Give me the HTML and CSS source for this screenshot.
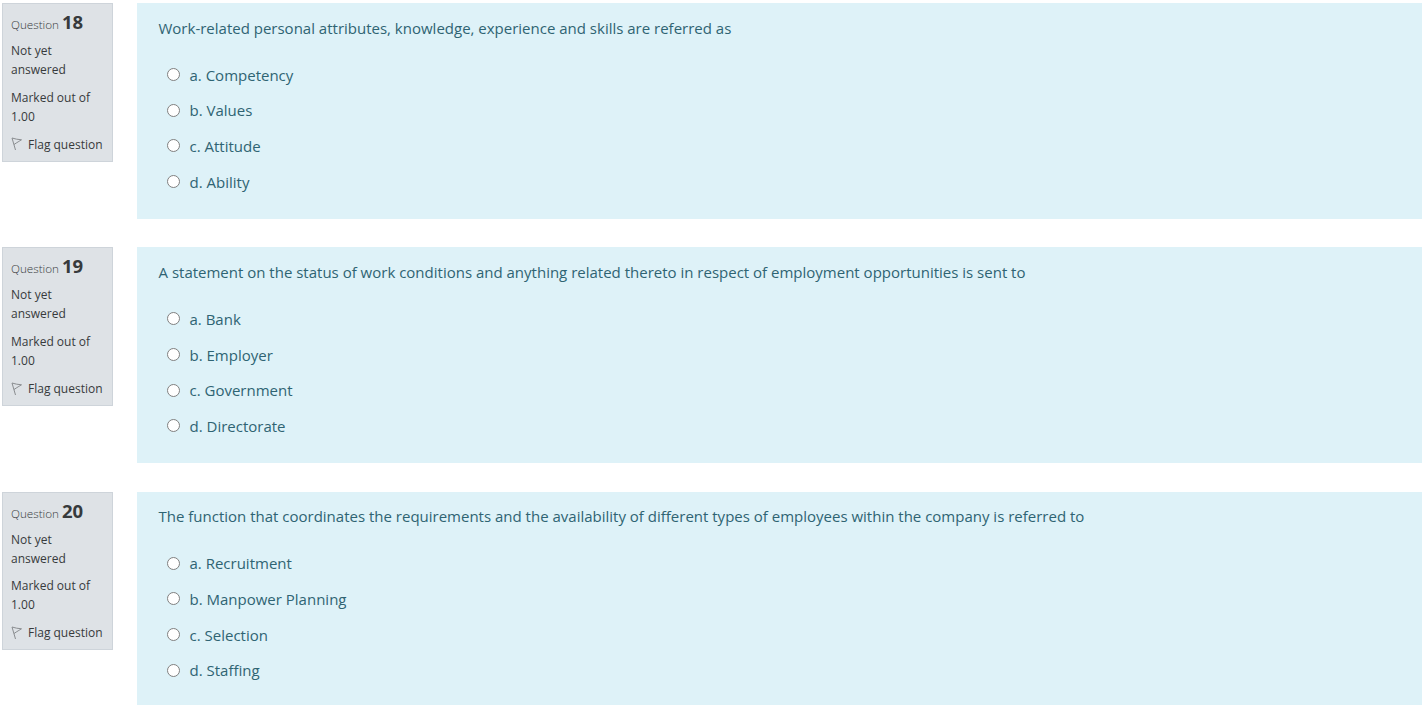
FILE: index.html
```html
<!DOCTYPE html>
<html lang="en">
<head>
<meta charset="utf-8">
<title>Quiz</title>
<link rel="stylesheet" href="styles.css">
</head>
<body>
<main class="quiz">
  <section class="que">
    <aside class="info">
      <h3 class="qno">Question <span class="num">18</span></h3>
      <p class="state">Not yet answered</p>
      <p class="grade">Marked out of 1.00</p>
      <p class="flag"><svg class="flag-icon" viewBox="0 0 12 14"><path d="M1 1 L4.5 13 M1 1 C4 2 7 2.5 10.5 2.8 C8.5 4 6 5.5 3 7.5" /></svg>Flag question</p>
    </aside>
    <div class="content">
      <p class="qtext">Work-related personal attributes, knowledge, experience and skills are referred as</p>
      <div class="answers">
        <label class="opt"><input type="radio" name="q18"><span>a. Competency</span></label>
        <label class="opt"><input type="radio" name="q18"><span>b. Values</span></label>
        <label class="opt"><input type="radio" name="q18"><span>c. Attitude</span></label>
        <label class="opt"><input type="radio" name="q18"><span>d. Ability</span></label>
      </div>
    </div>
  </section>
  <section class="que">
    <aside class="info">
      <h3 class="qno">Question <span class="num">19</span></h3>
      <p class="state">Not yet answered</p>
      <p class="grade">Marked out of 1.00</p>
      <p class="flag"><svg class="flag-icon" viewBox="0 0 12 14"><path d="M1 1 L4.5 13 M1 1 C4 2 7 2.5 10.5 2.8 C8.5 4 6 5.5 3 7.5" /></svg>Flag question</p>
    </aside>
    <div class="content">
      <p class="qtext">A statement on the status of work conditions and anything related thereto in respect of employment opportunities is sent to</p>
      <div class="answers">
        <label class="opt"><input type="radio" name="q19"><span>a. Bank</span></label>
        <label class="opt"><input type="radio" name="q19"><span>b. Employer</span></label>
        <label class="opt"><input type="radio" name="q19"><span>c. Government</span></label>
        <label class="opt"><input type="radio" name="q19"><span>d. Directorate</span></label>
      </div>
    </div>
  </section>
  <section class="que">
    <aside class="info">
      <h3 class="qno">Question <span class="num">20</span></h3>
      <p class="state">Not yet answered</p>
      <p class="grade">Marked out of 1.00</p>
      <p class="flag"><svg class="flag-icon" viewBox="0 0 12 14"><path d="M1 1 L4.5 13 M1 1 C4 2 7 2.5 10.5 2.8 C8.5 4 6 5.5 3 7.5" /></svg>Flag question</p>
    </aside>
    <div class="content">
      <p class="qtext">The function that coordinates the requirements and the availability of different types of employees within the company is referred to</p>
      <div class="answers">
        <label class="opt"><input type="radio" name="q20"><span>a. Recruitment</span></label>
        <label class="opt"><input type="radio" name="q20"><span>b. Manpower Planning</span></label>
        <label class="opt"><input type="radio" name="q20"><span>c. Selection</span></label>
        <label class="opt"><input type="radio" name="q20"><span>d. Staffing</span></label>
      </div>
    </div>
  </section>
</main>
</body>
</html>
```
FILE: styles.css
```css
html, body {
  margin: 0;
  padding: 0;
  background: #fff;
  overflow: hidden;
}
body {
  font-family: "Open Sans", sans-serif;
  font-size: 15px;
  color: #373a3c;
}
.quiz {
  padding: 3px 0 0 2px;
}
.que {
  display: flex;
  align-items: flex-start;
  gap: 24px;
  height: 216px;
  margin-bottom: 28.33px;
}
.info {
  box-sizing: border-box;
  width: 111px;
  height: 158.7px;
  flex: none;
  padding: 7px 6px 0 8px;
  background: #dee2e6;
  border: 1px solid #ced4da;
  font-size: 12px;
  line-height: 19px;
}
.qno {
  height: 22px;
  margin: 0 0 8px;
  font-size: 11.7px;
  font-weight: 300;
  line-height: 22px;
  white-space: nowrap;
}
.num {
  font-size: 18.5px;
  font-weight: 700;
}
.state, .grade, .flag {
  margin: 0 0 9px;
}
.state {
  margin-bottom: 8.7px;
}
.flag {
  display: flex;
  align-items: center;
  white-space: nowrap;
}
.flag-icon {
  width: 12px;
  height: 14px;
  margin-right: 5px;
  flex: none;
  fill: none;
  stroke: #8a8d90;
  stroke-width: 1;
}
.content {
  flex: 1;
  height: 216px;
  box-sizing: border-box;
  padding: 13.7px 21.5px 0;
  background: #def2f8;
  color: #2f6473;
}
.qtext {
  margin: 0 0 18.05px;
  line-height: 22px;
}
.answers {
  display: flex;
  flex-direction: column;
}
.opt {
  display: flex;
  align-items: center;
  height: 35.7px;
  padding-left: 8.5px;
}
.opt input {
  appearance: none;
  box-sizing: border-box;
  width: 13px;
  height: 13px;
  margin: 0 9.5px 0 0;
  flex: none;
  background: #fff;
  border: 1.4px solid #808080;
  border-radius: 50%;
}
```
